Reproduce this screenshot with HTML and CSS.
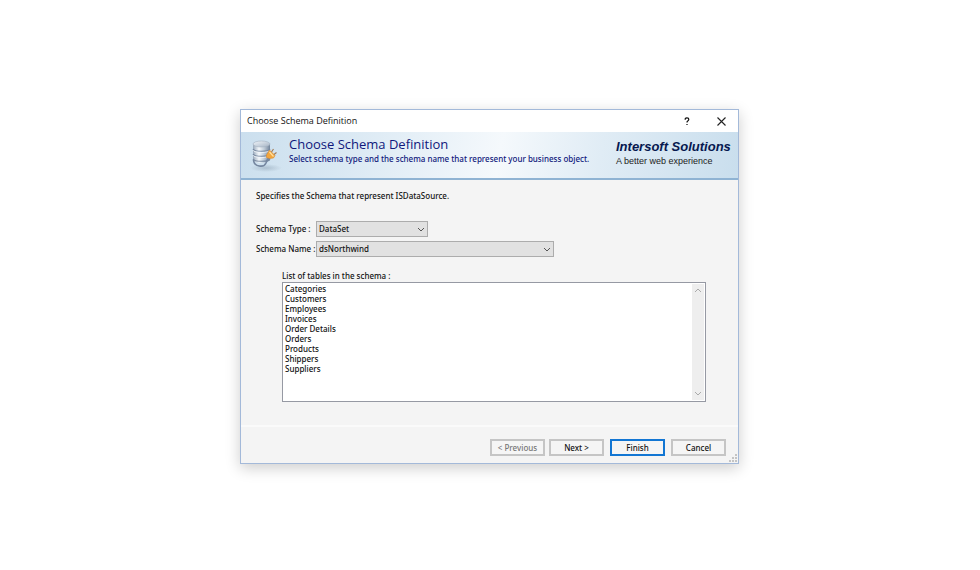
FILE: index.html
```html
<!DOCTYPE html>
<html lang="en">
<head>
<meta charset="utf-8">
<title>Choose Schema Definition</title>
<link rel="stylesheet" href="styles.css">
</head>
<body>
<main class="dialog">
  <div class="titlebar">
    <span class="titlebar-text">Choose Schema Definition</span>
    <button class="title-button" type="button" aria-label="Help">
      <svg width="8" height="9" viewBox="0 0 9 10"><path d="M2.5 3V1.8Q3 .8 4.5.8Q6.5.8 6.5 2.5Q6.5 3.7 5.3 4.5Q4.5 5 4.5 6.2M4.5 7.7V9" fill="none" stroke="#111" stroke-width="1.4"/></svg>
    </button>
    <button class="title-button" type="button" aria-label="Close">
      <svg width="9" height="9" viewBox="0 0 9 9"><path d="M.5.5L8.5 8.5M8.5.5L.5 8.5" stroke="#222" stroke-width="1.1"/></svg>
    </button>
  </div>
  <header class="banner">
    <svg class="banner-icon" width="34" height="36" viewBox="0 0 34 36" aria-hidden="true">
      <defs>
        <linearGradient id="metal" x1="0" x2="1"><stop offset="0" stop-color="#98a8ba"/><stop offset=".35" stop-color="#f4f8fb"/><stop offset=".65" stop-color="#c0ccd8"/><stop offset="1" stop-color="#71839a"/></linearGradient>
        <linearGradient id="lid" x1="0" x2="1" y2="1"><stop offset="0" stop-color="#f1f5f9"/><stop offset="1" stop-color="#a4b3c4"/></linearGradient>
        <radialGradient id="shade"><stop offset="0" stop-color="#5d7186" stop-opacity=".3"/><stop offset="1" stop-color="#5d7186" stop-opacity="0"/></radialGradient>
      </defs>
      <ellipse cx="17" cy="30" rx="16" ry="4" fill="url(#shade)"/>
      <path d="M4 6V21C4 26 21 26 21 21V6Z" fill="url(#metal)"/>
      <path d="M4 11C5 14 20 14 21 11M4 16C5 19 20 19 21 16M4 21C5 24 20 24 21 21" fill="none" stroke="#7688a0" stroke-width="1.1"/>
      <path d="M4 12.2C5 15.2 20 15.2 21 12.2M4 17.2C5 20.2 20 20.2 21 17.2" fill="none" stroke="#f4f8fb" stroke-width=".8"/>
      <ellipse cx="12.5" cy="6" rx="8.500" ry="3" fill="url(#lid)" stroke="#a2b0c0" stroke-width=".6"/>
      <path d="M4.5 22C5 29 15 30 17 25Q18 21 21 19.5" fill="none" stroke="#7587a0" stroke-width="1.6"/>
      <path d="M17.5 17L20.5 12L26 17.5L24.500 20L20.500 20.500L17.500 19.500Z" fill="#f3a63c" stroke="#d68a30" stroke-width=".6"/>
      <path d="M20.5 14L24.5 18.5" stroke="#ffe0a0" stroke-width="1.2"/>
      <path d="M22.5 14L24.500 11M25 16.500L27.500 14.500" stroke="#a37c58" stroke-width="1.2"/>
    </svg>
    <div class="banner-copy">
      <h1>Choose Schema Definition</h1>
      <p>Select schema type and the schema name that represent your business object.</p>
    </div>
    <div class="brand">
      <strong>Intersoft Solutions</strong>
      <span>A better web experience</span>
    </div>
  </header>
  <form class="content">
    <p class="intro">Specifies the Schema that represent ISDataSource.</p>
    <div class="field">
      <label for="type">Schema Type :</label>
      <div class="combo combo-short">
        <select id="type"><option>DataSet</option></select>
        <svg class="chevron" width="8" height="5" viewBox="0 0 8 5"><path d="M1 1L4 4L7 1"/></svg>
      </div>
    </div>
    <div class="field">
      <label for="name">Schema Name :</label>
      <div class="combo combo-long">
        <select id="name"><option>dsNorthwind</option></select>
        <svg class="chevron" width="8" height="5" viewBox="0 0 8 5"><path d="M1 1L4 4L7 1"/></svg>
      </div>
    </div>
    <div class="tables">
      <label for="tables">List of tables in the schema :</label>
      <div class="listbox">
        <select id="tables" size="11">
          <option>Categories</option>
          <option>Customers</option>
          <option>Employees</option>
          <option>Invoices</option>
          <option>Order Details</option>
          <option>Orders</option>
          <option>Products</option>
          <option>Shippers</option>
          <option>Suppliers</option>
        </select>
        <div class="scrollbar">
          <svg width="8" height="5" viewBox="0 0 8 5"><path d="M1 4L4 1L7 4"/></svg>
          <svg width="8" height="5" viewBox="0 0 8 5"><path d="M1 1L4 4L7 1"/></svg>
        </div>
      </div>
    </div>
  </form>
  <footer class="actions">
    <button type="button" disabled>&lt; Previous</button>
    <button type="button">Next &gt;</button>
    <button type="button" class="primary">Finish</button>
    <button type="button">Cancel</button>
    <svg class="grip" width="8" height="8" viewBox="0 0 8 8"><path d="M6 0h2v2h-2zM3 3h2v2h-2zM6 3h2v2h-2zM0 6h2v2h-2zM3 6h2v2h-2zM6 6h2v2h-2z" fill="#c4c4c4"/></svg>
  </footer>
</main>
</body>
</html>
```
FILE: styles.css
```css
* { box-sizing: border-box; }

body {
  margin: 0;
  padding: 109px 17px 40px 16px;
  background: #fff;
  color: #111;
  font: 500 8px/12px "Noto Sans", sans-serif;
}

h1, p { margin: 0; }

button, select { font: inherit; color: inherit; border-radius: 0; }

.dialog {
  max-width: 499px;
  margin: 0 auto;
  border: 1px solid #a3b9d9;
  background: #f4f4f4;
  box-shadow: 0 4px 14px rgba(0, 0, 0, .2);
}

.titlebar {
  display: flex;
  align-items: center;
  height: 22px;
  padding-left: 6px;
  background: #fff;
}

.titlebar-text {
  flex: 1;
  font: 400 9px/12px "Open Sans", sans-serif;
}

.title-button {
  display: flex;
  align-items: center;
  justify-content: center;
  width: 34px;
  height: 22px;
  padding: 0;
  border: 0;
  background: none;
}

.banner {
  display: flex;
  height: 48px;
  padding: 4px 3px 0 8px;
  border-bottom: 2px solid #8fb3d3;
  background: linear-gradient(100deg, #cbdfee 0%, #d9e8f3 20%, #f5f9fc 52%, #e0ecf5 72%, #c9deed 100%);
  color: #10187c;
}

.banner-icon { flex: none; margin-top: 2px; }

.banner-copy { flex: 1; padding-left: 6px; }

.banner h1 { font: 400 13px/16px "Open Sans", sans-serif; }

.banner p { line-height: 14px; }

.brand {
  display: flex;
  flex-direction: column;
  width: 119px;
  padding-top: 4px;
  font-family: "Liberation Sans", sans-serif;
}

.brand strong {
  color: #06184f;
  font-size: 13px;
  font-style: italic;
  line-height: 14px;
  white-space: nowrap;
}

.brand span { color: #222; font-size: 9px; line-height: 14px; }

.content { padding: 10px 32px 23px 15px; }

.intro { margin-bottom: 19px; }

.field {
  display: flex;
  align-items: center;
  height: 16px;
  margin-bottom: 4px;
}

.field label { width: 60px; white-space: nowrap; }

.combo { position: relative; height: 16px; }

.combo-short { width: 112px; }

.combo-long { width: 238px; }

.combo select {
  appearance: none;
  display: block;
  width: 100%;
  height: 16px;
  padding: 0 16px 0 2px;
  border: 1px solid #acacac;
  background: #e1e1e1;
}

.chevron {
  position: absolute;
  top: 6px;
  right: 3px;
  fill: none;
  stroke: #555;
  pointer-events: none;
}

.tables { padding: 9px 0 0 26px; }

.tables label { display: block; }

.listbox {
  display: flex;
  height: 120px;
  border: 1px solid #9699a3;
  background: #fff;
}

.listbox select {
  flex: 1;
  height: 118px;
  padding: 0 0 0 2px;
  border: 0;
  background: none;
  overflow: hidden;
  outline: 0;
}

.listbox option {
  height: 10px;
  min-height: 0;
  padding: 0;
  font-weight: 500;
}

.scrollbar {
  display: flex;
  flex-direction: column;
  align-items: center;
  justify-content: space-between;
  width: 12px;
  margin: 1px;
  padding: 4px 0;
  background: #eee;
  fill: none;
  stroke: #aaa;
}

.actions {
  position: relative;
  display: flex;
  justify-content: flex-end;
  gap: 4px;
  padding: 12px 12px 7px;
  border-top: 2px solid #fafafa;
}

.actions button {
  width: 55px;
  height: 17px;
  padding: 0;
  border: 2px solid #c5c5c5;
  background: #f5f5f5;
  line-height: 12px;
}

.actions button:disabled { color: #777; }

.actions .primary { margin: 0 2px; border-color: #1276d3; }

.grip { position: absolute; right: 1px; bottom: 1px; }
```
